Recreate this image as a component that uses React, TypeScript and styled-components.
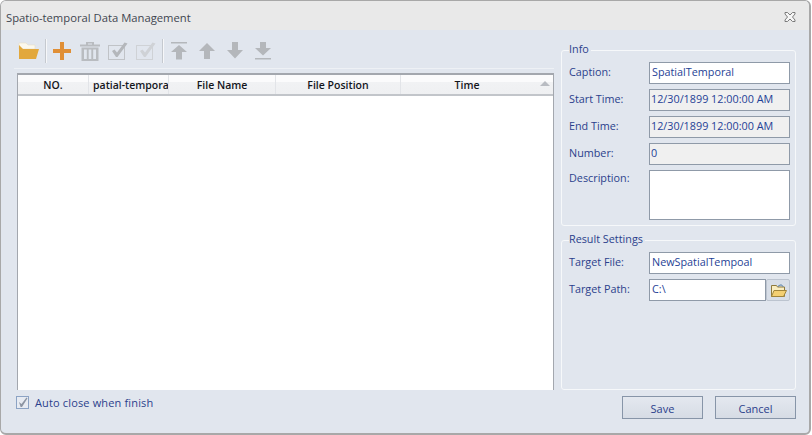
import React from "react";
import styled, { createGlobalStyle } from "styled-components";

const Global = createGlobalStyle`
  html, body { margin: 0; padding: 0; background: #ffffff; }
  * { box-sizing: border-box; }
  body { font-family: "Open Sans", "Noto Sans", sans-serif; font-size: 11px; }
`;

const Window = styled.div`
  width: 811px;
  height: 435px;
  border: 1px solid #a8a8a8;
  border-bottom-width: 2px;
  border-right-width: 2px;
  border-radius: 6px;
  background: #e1e6ee;
  display: flex;
  flex-direction: column;
  overflow: hidden;
`;

const TitleBar = styled.div`
  height: 29px;
  flex: none;
  background: #e9e9e9;
  display: flex;
  align-items: center;
  justify-content: space-between;
  padding: 3px 13px 0 5px;
  color: #3f4650;
  font-size: 11.25px;
`;

const Body = styled.div`
  flex: 1;
  display: grid;
  grid-template-columns: 537px 235px;
  grid-template-rows: 1fr 29px;
  column-gap: 7px;
  padding: 0 0 15px 16px;
`;

const LeftPane = styled.div`
  display: flex;
  flex-direction: column;
  min-height: 0;
`;

const Toolbar = styled.div`
  height: 39px;
  flex: none;
  margin-left: -3px;
  width: 540px;
  padding: 9px 0 0 4px;
  border-bottom: 1px solid #eef1f5;
  display: flex;
  align-items: flex-start;
`;

const ToolSlot = styled.span<{ $w?: number }>`
  width: ${(p) => p.$w ?? 28}px;
  height: 24px;
  flex: none;
  display: flex;
  align-items: center;
  justify-content: center;
`;

const ToolSep = styled.span<{ $ml: number }>`
  width: 1px;
  height: 24px;
  flex: none;
  margin: 0 1px 0 ${(p) => p.$ml}px;
  background: #f6f7f9;
  box-shadow: -1px 0 0 #c5c9cf;
`;

const Table = styled.div`
  flex: 1;
  margin-top: 4px;
  background: #ffffff;
  border-top: 2px solid #a3a7ae;
  border-left: 1px solid #a3a7ae;
  border-right: 1px solid #a3a7ae;
  display: flex;
  flex-direction: column;
`;

const HeaderRow = styled.div`
  height: 21px;
  flex: none;
  display: grid;
  grid-template-columns: 71px 80px 107px 125px 1fr;
  background: linear-gradient(#fbfbfc 0%, #fbfbfc 35%, #f1f2f4 36%, #eff0f2 100%);
  border-bottom: 2px solid #c2c5ca;
`;

const HeaderCell = styled.div<{ $start?: boolean; $pr?: number }>`
  position: relative;
  display: flex;
  align-items: center;
  justify-content: ${(p) => (p.$start ? "flex-start" : "center")};
  padding-left: ${(p) => (p.$start ? 4 : 0)}px;
  padding-right: ${(p) => p.$pr ?? 0}px;
  overflow: hidden;
  white-space: nowrap;
  color: #14161c;
  font-weight: 600;
  font-size: 10.5px;
  border-right: 1px solid #e2e4e8;
  &:last-child { border-right: 0; }
`;

const SortMark = styled.span`
  position: absolute;
  right: 3px;
  top: 6px;
  width: 0;
  height: 0;
  border-left: 5px solid transparent;
  border-right: 5px solid transparent;
  border-bottom: 5px solid #b9bcc2;
`;

const SidePane = styled.div`
  display: flex;
  flex-direction: column;
  padding-top: 12px;
`;

const Group = styled.fieldset<{ $h: number; $gap: number }>`
  height: ${(p) => p.$h}px;
  flex: none;
  padding: 0 5px 0 7px;
  border: 1px solid #f6f8fa;
  border-radius: 3px;
  margin: 0 0 ${(p) => p.$gap}px 0;
  min-width: 0;
`;

const Legend = styled.legend`
  margin-left: 0;
  padding: 0 2px 4px 0;
  color: #2b3f8c;
  font-size: 10.8px;
  line-height: 13px;
`;

const Rows = styled.div`
  display: flex;
  flex-direction: column;
  gap: 5px;
  margin-top: 3px;
`;

const Row = styled.div`
  display: grid;
  grid-template-columns: 80px 1fr;
  align-items: center;
`;

const TallRow = styled(Row)`
  align-items: start;
`;

const FieldLabel = styled.label<{ $top?: boolean }>`
  color: #2b3f8c;
  font-size: 10.8px;
  padding-bottom: ${(p) => (p.$top ? "0" : "4px")};
`;

const Field = styled.div<{ $h?: number; $off?: boolean }>`
  height: ${(p) => p.$h ?? 22}px;
  border: 1px solid #8f9aa8;
  background: ${(p) => (p.$off ? "#f0f0f0" : "#ffffff")};
  color: #1f3f96;
  font-size: 10.8px;
  padding: 2px ${(p) => (p.$off ? "1px" : "2px")};
  line-height: 14px;
  white-space: nowrap;
  overflow: hidden;
`;

const PathRow = styled.div`
  display: grid;
  grid-template-columns: 117px 24px;
`;

const BrowseButton = styled.div`
  height: 22px;
  border: 1px solid #bcc4cf;
  border-radius: 2px;
  background: #d8dee7;
  display: flex;
  align-items: center;
  justify-content: center;
`;

const Footer = styled.div`
  grid-column: 1 / -1;
  display: flex;
  align-items: flex-start;
  justify-content: space-between;
  padding-top: 6px;
  margin-left: -1px;
`;

const CheckLine = styled.div`
  display: flex;
  align-items: center;
  gap: 6px;
  color: #2b3f8c;
  font-size: 11px;
  letter-spacing: 0.15px;
  line-height: 13px;
`;

const CheckBox = styled.span`
  width: 13px;
  height: 13px;
  border: 1px solid #8ca3c4;
  background: #e7ebf2;
  display: flex;
  align-items: center;
  justify-content: center;
`;

const Buttons = styled.div`
  display: flex;
  gap: 12px;
`;

const Button = styled.div`
  width: 81px;
  height: 23px;
  padding-top: 1px;
  border: 1px solid #8795a8;
  background: linear-gradient(#e4e8ef, #d6dce5);
  color: #2b3f8c;
  font-size: 11px;
  display: flex;
  align-items: center;
  justify-content: center;
`;

const Folder = () => (
  <svg width="21" height="18" viewBox="0 0 21 18">
    <path d="M1 1h7l2 2h7v4H1z" fill="#fbf8ee" stroke="#e9dfc4" strokeWidth="0.6" />
    <path d="M5 7h16l-3 10H1V3z" fill="#e2a83d" />
  </svg>
);

const Plus = () => (
  <svg width="18" height="18" viewBox="0 0 18 18">
    <path d="M7 0h4v7h7v4h-7v7H7v-7H0V7h7z" fill="#e08f36" />
  </svg>
);

const Trash = () => (
  <svg width="20" height="19" viewBox="0 0 20 19" fill="#b9bcc0">
    <path d="M0 2.500h20v2H0zM6 0h8v2.500h-2V1.500H8v1H6z" />
    <path d="M1.500 5.500h17V19h-17zm2.500 2v9.500h2.800V7.500zm4.700 0v9.500h2.600V7.500zm4.500 0v9.500H16V7.500z" fillRule="evenodd" />
  </svg>
);

const Tick = ({ c, b }: { c: string; b: string }) => (
  <svg width="20" height="18" viewBox="0 0 20 18">
    <rect x="0.5" y="3.500" width="16" height="14" fill="none" stroke={b} />
    <path d="M4 9l2.500-1.500 2.500 3L16.500 0.500l3 1L9.500 15H8z" fill={c} />
  </svg>
);

const Arrow = ({ d }: { d: "top" | "up" | "down" | "bottom" }) => (
  <svg width="16" height="18" viewBox="0 0 16 18" fill="#b4b7bb">
    {d === "top" && (
      <>
        <rect x="0" y="0" width="16" height="1.500" />
        <path d="M8 3l8 7h-5v7.500H5V10H0z" />
      </>
    )}
    {d === "up" && <path d="M8 1l8 8h-5v8H5V9H0z" />}
    {d === "down" && <path d="M5 0h6v8h5l-8 8.500L0 8h5z" />}
    {d === "bottom" && (
      <>
        <path d="M5 0h6v6h5l-8 7.500L0 6h5z" />
        <rect x="0" y="16" width="16" height="1.500" />
      </>
    )}
  </svg>
);

const Close = () => (
  <svg width="12" height="10" viewBox="0 0 12 10">
    <path d="M1 .5h2.500L6 3l2.500-2.500H11V2L8.500 5 11 8v1.500H8.500L6 7 3.500 9.500H1V8l2.500-3L1 2z" fill="#f5f5f5" stroke="#6e6e6e" strokeWidth="0.9" />
  </svg>
);

const SmallFolder = () => (
  <svg width="17" height="15" viewBox="0 0 17 15">
    <path d="M1.500 13.500V2.500h5l1 1.500h7v9.500z" fill="#f9edc0" stroke="#8f7a3c" />
    <path d="M1.500 13.500l2.500-6h12.500l-3 6z" fill="#f3cf72" stroke="#a0843a" />
    <path d="M8 3.500c2-2 4-2 5 0" fill="none" stroke="#3f6f9f" />
  </svg>
);

const Mini = () => (
  <svg width="11" height="11" viewBox="0 0 11 11">
    <path d="M2 5l2.500 2L9.500 0.500l1 .8L5 10H3.600z" fill="#8d95a3" />
  </svg>
);

export default function App() {
  return (
    <>
      <Global />
      <Window>
        <TitleBar>
          <span>Spatio-temporal Data Management</span>
          <Close />
        </TitleBar>
        <Body>
          <LeftPane>
            <Toolbar>
              <ToolSlot $w={21}><Folder /></ToolSlot>
              <ToolSep $ml={7} />
              <ToolSlot><Plus /></ToolSlot>
              <ToolSlot><Trash /></ToolSlot>
              <ToolSlot><Tick c="#b4b7bb" b="#c0c3c7" /></ToolSlot>
              <ToolSlot><Tick c="#cfd2d6" b="#cfd2d6" /></ToolSlot>
              <ToolSep $ml={3} />
              <ToolSlot><Arrow d="top" /></ToolSlot>
              <ToolSlot><Arrow d="up" /></ToolSlot>
              <ToolSlot><Arrow d="down" /></ToolSlot>
              <ToolSlot><Arrow d="bottom" /></ToolSlot>
            </Toolbar>
            <Table>
              <HeaderRow>
                <HeaderCell>NO.</HeaderCell>
                <HeaderCell $start>patial-temporal</HeaderCell>
                <HeaderCell>File Name</HeaderCell>
                <HeaderCell>File Position</HeaderCell>
                <HeaderCell $pr={20}>Time<SortMark /></HeaderCell>
              </HeaderRow>
            </Table>
          </LeftPane>
          <SidePane>
            <Group $h={184} $gap={6}>
              <Legend>Info</Legend>
              <Rows>
                <Row><FieldLabel>Caption:</FieldLabel><Field>SpatialTemporal</Field></Row>
                <Row><FieldLabel>Start Time:</FieldLabel><Field $off>12/30/1899 12:00:00 AM</Field></Row>
                <Row><FieldLabel>End Time:</FieldLabel><Field $off>12/30/1899 12:00:00 AM</Field></Row>
                <Row><FieldLabel>Number:</FieldLabel><Field $off>0</Field></Row>
                <TallRow><FieldLabel $top>Description:</FieldLabel><Field $h={50} /></TallRow>
              </Rows>
            </Group>
            <Group $h={158} $gap={0}>
              <Legend>Result Settings</Legend>
              <Rows>
                <Row><FieldLabel>Target File:</FieldLabel><Field>NewSpatialTempoal</Field></Row>
                <Row>
                  <FieldLabel>Target Path:</FieldLabel>
                  <PathRow>
                    <Field>C:\</Field>
                    <BrowseButton><SmallFolder /></BrowseButton>
                  </PathRow>
                </Row>
              </Rows>
            </Group>
          </SidePane>
          <Footer>
            <CheckLine>
              <CheckBox><Mini /></CheckBox>
              <span>Auto close when finish</span>
            </CheckLine>
            <Buttons>
              <Button>Save</Button>
              <Button>Cancel</Button>
            </Buttons>
          </Footer>
        </Body>
      </Window>
    </>
  );
}
